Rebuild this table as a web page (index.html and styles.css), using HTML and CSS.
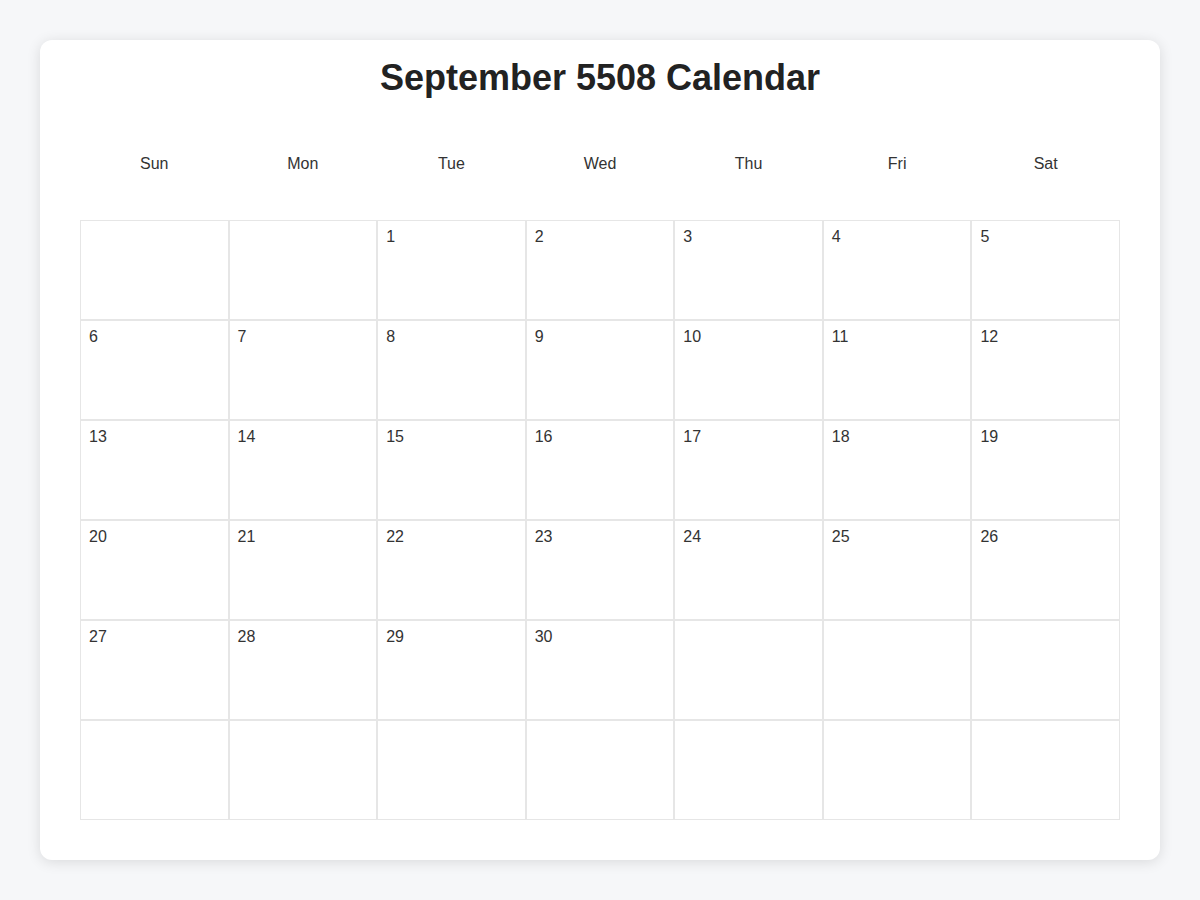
FILE: index.html
```html
<!DOCTYPE html>
<html>
<head>
<meta charset="utf-8">
<title>September 5508 Calendar</title>
<link rel="stylesheet" href="styles.css">
</head>
<body>
<div class="card">
  <h1 class="title">September 5508 Calendar</h1>
  <div class="weekdays">
    <div class="wd">Sun</div><div class="wd">Mon</div><div class="wd">Tue</div><div class="wd">Wed</div><div class="wd">Thu</div><div class="wd">Fri</div><div class="wd">Sat</div>
  </div>
  <div class="grid">
    <div class="cell"></div><div class="cell"></div><div class="cell">1</div><div class="cell">2</div><div class="cell">3</div><div class="cell">4</div><div class="cell">5</div>
    <div class="cell">6</div><div class="cell">7</div><div class="cell">8</div><div class="cell">9</div><div class="cell">10</div><div class="cell">11</div><div class="cell">12</div>
    <div class="cell">13</div><div class="cell">14</div><div class="cell">15</div><div class="cell">16</div><div class="cell">17</div><div class="cell">18</div><div class="cell">19</div>
    <div class="cell">20</div><div class="cell">21</div><div class="cell">22</div><div class="cell">23</div><div class="cell">24</div><div class="cell">25</div><div class="cell">26</div>
    <div class="cell">27</div><div class="cell">28</div><div class="cell">29</div><div class="cell">30</div><div class="cell"></div><div class="cell"></div><div class="cell"></div>
    <div class="cell"></div><div class="cell"></div><div class="cell"></div><div class="cell"></div><div class="cell"></div><div class="cell"></div><div class="cell"></div>
  </div>
</div>
</body>
</html>
```
FILE: styles.css
```css
html, body {
  margin: 0;
  padding: 0;
}
body {
  background: #f6f7f9;
  font-family: "Liberation Sans", Arial, sans-serif;
  color: #333;
  padding: 40px;
}
.card {
  background: #fff;
  border-radius: 12px;
  box-shadow: 0 2px 14px rgba(0, 0, 0, 0.12);
  padding: 18px 40px 40px;
}
.title {
  margin: 0;
  text-align: center;
  font-size: 36px;
  font-weight: bold;
  color: #222;
  line-height: 40px;
}
.weekdays {
  display: grid;
  grid-template-columns: repeat(7, 1fr);
  margin-top: 50px;
  margin-bottom: 40px;
}
.wd {
  text-align: center;
  font-size: 16px;
  line-height: 20px;
  padding: 6px 0;
  color: #333;
}
.grid {
  display: grid;
  grid-template-columns: repeat(7, 1fr);
}
.cell {
  height: 100px;
  box-sizing: border-box;
  border: 1px solid #e6e6e6;
  padding: 7px 8px 8px;
  font-size: 16px;
  line-height: 18px;
  color: #333;
}
```
